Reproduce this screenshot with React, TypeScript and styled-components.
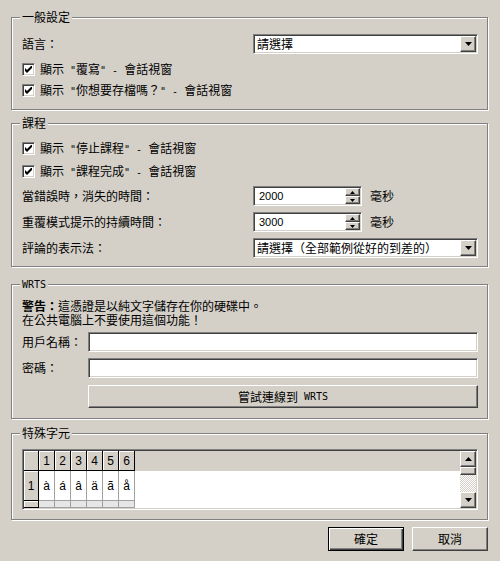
import styled, { createGlobalStyle, css } from "styled-components"

const GlobalStyle = createGlobalStyle`
  html, body {
    margin: 0;
    padding: 0;
    background: #d4d0c8;
  }
  body {
    font-family: "Noto Sans CJK TC", "Noto Sans", sans-serif;
    font-size: 12px;
    line-height: 14px;
    color: #000;
  }
`

const sunken = css`
  box-sizing: border-box;
  border: 1px solid;
  border-color: #808080 #fff #fff #808080;
  box-shadow: inset 1px 1px 0 #404040, inset -1px -1px 0 #d4d0c8;
  background: #fff;
`

const raised = css`
  box-sizing: border-box;
  border: 1px solid;
  border-color: #fff #404040 #404040 #fff;
  box-shadow: inset -1px -1px 0 #808080, inset 1px 1px 0 #d4d0c8;
  background: #d4d0c8;
`

const Dialog = styled.div`
  width: 500px;
  height: 561px;
  box-sizing: border-box;
  padding: 10px 12px 0 11px;
  display: flex;
  flex-direction: column;
  background: #d4d0c8;
`

const Group = styled.fieldset<{ $mt: number; $pt: number; $pb: number }>`
  margin: ${p => p.$mt}px 0 0;
  padding: ${p => p.$pt}px 9px ${p => p.$pb}px 10px;
  min-width: 0;
  border: 1px solid #808080;
  box-shadow: 1px 1px 0 #fff, inset 1px 1px 0 #fff;
`

const Legend = styled.legend`
  padding: 0 2px;
  margin-left: -2px;
  line-height: 14px;
  background: #d4d0c8;
`

// half-width latin runs, 6px per character like the original dialog font
const Latin = styled.span`
  font-family: "DejaVu Sans Mono", "Liberation Mono", monospace;
  font-size: 10px;
  white-space: pre;
`

const Row = styled.div<{ $h: number; $mt?: number }>`
  display: flex;
  align-items: center;
  height: ${p => p.$h}px;
  margin-top: ${p => p.$mt ?? 0}px;
`

const Label = styled.span<{ $w: number }>`
  flex: none;
  width: ${p => p.$w}px;
  white-space: nowrap;
`

const CheckBox = styled.span`
  ${sunken};
  flex: none;
  width: 13px;
  height: 13px;
  display: flex;
  align-items: center;
  justify-content: center;
  margin-right: 5px;
`

const Combo = styled.div<{ $w: number }>`
  ${sunken};
  width: ${p => p.$w}px;
  height: 20px;
  padding: 1px;
  display: flex;
  align-items: center;
`

const FieldText = styled.span<{ $pl: number; $latin?: boolean }>`
  flex: 1;
  min-width: 0;
  padding-left: ${p => p.$pl}px;
  white-space: nowrap;
  ${p => p.$latin && css`
    font-family: "Liberation Sans", Arial, sans-serif;
    font-size: 11px;
  `}
`

const DropButton = styled.span`
  ${raised};
  flex: none;
  width: 16px;
  height: 16px;
  display: flex;
  align-items: center;
  justify-content: center;
`

const SpinStack = styled.span`
  flex: none;
  width: 15px;
  height: 16px;
  display: flex;
  flex-direction: column;
`

const SpinButton = styled.span`
  ${raised};
  height: 8px;
  display: flex;
  align-items: center;
  justify-content: center;
`

const Unit = styled.span`
  margin-left: 8px;
`

const TextInput = styled.div`
  ${sunken};
  flex: 1;
  height: 20px;
`

const Warning = styled.div`
  line-height: 14px;
  b {
    font-weight: bold;
  }
`

const PushButton = styled.div<{ $w?: number; $h: number; $default?: boolean }>`
  ${raised};
  ${p => p.$w ? css`width: ${p.$w}px;` : css`flex: 1;`}
  height: ${p => p.$h}px;
  display: flex;
  align-items: center;
  justify-content: center;
  white-space: nowrap;
  ${p => p.$default && css`
    border: 1px solid #000;
    box-shadow: inset 1px 1px 0 #fff, inset -1px -1px 0 #404040, inset -2px -2px 0 #808080;
  `}
`

const Footer = styled.div`
  display: flex;
  justify-content: flex-end;
  gap: 8px;
  margin-top: 7px;
`

const GridFrame = styled.div`
  ${sunken};
  height: 61px;
  padding: 1px;
  display: flex;
`

const Sheet = styled.div`
  flex: 1;
  display: grid;
  grid-template-columns: 15px repeat(6, 16px) 1fr;
  grid-template-rows: 20px 30px 1fr;
  background: #fff;
  overflow: hidden;
  font-family: "Liberation Sans", Arial, sans-serif;
  font-size: 12px;
`

const HeadCell = styled.div<{ $fill?: boolean }>`
  box-sizing: border-box;
  background: #d4d0c8;
  display: flex;
  align-items: center;
  justify-content: center;
  ${p => !p.$fill && css`
    border-right: 1px solid #000;
    border-bottom: 1px solid #000;
    box-shadow: inset 1px 1px 0 #fff;
  `}
`

const Cell = styled.div<{ $dim?: boolean }>`
  box-sizing: border-box;
  background: ${p => p.$dim ? "#e6e6e6" : "#fff"};
  border-right: 1px solid #a0a0a0;
  border-bottom: 1px solid #a0a0a0;
  display: flex;
  align-items: center;
  justify-content: center;
`

const Blank = styled.div`
  background: #fff;
`

const ScrollBar = styled.div`
  flex: none;
  width: 16px;
  display: flex;
  flex-direction: column;
`

const ScrollButton = styled.span<{ $h: number }>`
  ${raised};
  flex: none;
  height: ${p => p.$h}px;
  display: flex;
  align-items: center;
  justify-content: center;
`

const ScrollTrack = styled.span`
  flex: 1;
  background: repeating-conic-gradient(#fff 0 25%, #d4d0c8 0 50%) 0 0 / 2px 2px;
`

const Check = () => (
  <svg width="7" height="7" viewBox="0 0 7 7">
    <path d="M0 2 L2 4 L6 0 L7 0 L7 2 L2 7 L0 5 Z" fill="#000" />
  </svg>
)

const Arrow = ({ up, w = 7 }: { up?: boolean; w?: number }) => {
  const h = Math.ceil(w / 2)
  return (
    <svg width={w} height={h} viewBox={`0 0 ${w} ${h}`}>
      <path d={up ? `M0 ${h} L${w / 2} 0 L${w} ${h} Z` : `M0 0 L${w} 0 L${w / 2} ${h} Z`} fill="#000" />
    </svg>
  )
}

// split a string so ascii runs get the half-width latin face
const Txt = ({ s }: { s: string }) => (
  <>
    {s.split(/([\x20-\x7e]+)/).map((part, i) =>
      i % 2 ? <Latin key={i}>{part}</Latin> : part
    )}
  </>
)

const CheckLine = ({ text, mt }: { text: string; mt?: number }) => (
  <Row $h={21} $mt={mt}>
    <CheckBox><Check /></CheckBox>
    <span><Txt s={text} /></span>
  </Row>
)

const SelectBox = ({ text }: { text: string }) => (
  <Combo $w={225}>
    <FieldText $pl={2}>{text}</FieldText>
    <DropButton><Arrow /></DropButton>
  </Combo>
)

const SpinBox = ({ value }: { value: string }) => (
  <Combo $w={109}>
    <FieldText $pl={4} $latin>{value}</FieldText>
    <SpinStack>
      <SpinButton><Arrow up w={5} /></SpinButton>
      <SpinButton><Arrow w={5} /></SpinButton>
    </SpinStack>
  </Combo>
)

const accents = ["à", "á", "â", "ä", "ã", "å"]

export default function App() {
  return (
    <Dialog>
      <GlobalStyle />

      <Group $mt={0} $pt={10} $pb={8}>
        <Legend>一般設定</Legend>
        <Row $h={20}>
          <Label $w={231}>語言：</Label>
          <SelectBox text="請選擇" />
        </Row>
        <CheckLine mt={5} text={'顯示 "覆寫" - 會話視窗'} />
        <CheckLine text={'顯示 "你想要存檔嗎？" - 會話視窗'} />
      </Group>

      <Group $mt={6} $pt={8} $pb={8}>
        <Legend>課程</Legend>
        <CheckLine text={'顯示 "停止課程" - 會話視窗'} />
        <CheckLine mt={2} text={'顯示 "課程完成" - 會話視窗'} />
        <Row $h={20} $mt={4}>
          <Label $w={231}>當錯誤時，消失的時間：</Label>
          <SpinBox value="2000" />
          <Unit>毫秒</Unit>
        </Row>
        <Row $h={20} $mt={6}>
          <Label $w={231}>重覆模式提示的持續時間：</Label>
          <SpinBox value="3000" />
          <Unit>毫秒</Unit>
        </Row>
        <Row $h={20} $mt={6}>
          <Label $w={231}>評論的表示法：</Label>
          <SelectBox text="請選擇（全部範例從好的到差的）" />
        </Row>
      </Group>

      <Group $mt={9} $pt={7} $pb={10}>
        <Legend><Latin>WRTS</Latin></Legend>
        <Warning>
          <b>警告：</b>這憑證是以純文字儲存在你的硬碟中。<br />
          在公共電腦上不要使用這個功能！
        </Warning>
        <Row $h={20} $mt={5}>
          <Label $w={66}>用戶名稱：</Label>
          <TextInput />
        </Row>
        <Row $h={20} $mt={6}>
          <Label $w={66}>密碼：</Label>
          <TextInput />
        </Row>
        <Row $h={23} $mt={7}>
          <Label $w={66} />
          <PushButton $h={23}><Txt s="嘗試連線到 WRTS" /></PushButton>
        </Row>
      </Group>

      <Group $mt={7} $pt={9} $pb={9}>
        <Legend>特殊字元</Legend>
        <GridFrame>
          <Sheet>
            <HeadCell />
            {accents.map((_, i) => <HeadCell key={i}>{i + 1}</HeadCell>)}
            <HeadCell $fill />
            <HeadCell>1</HeadCell>
            {accents.map(a => <Cell key={a}>{a}</Cell>)}
            <Blank />
            <HeadCell />
            {accents.map(a => <Cell key={a} $dim />)}
            <Blank />
          </Sheet>
          <ScrollBar>
            <ScrollButton $h={16}><Arrow up /></ScrollButton>
            <ScrollButton $h={8} />
            <ScrollTrack />
            <ScrollButton $h={16}><Arrow /></ScrollButton>
          </ScrollBar>
        </GridFrame>
      </Group>

      <Footer>
        <PushButton $w={76} $h={24} $default>確定</PushButton>
        <PushButton $w={76} $h={24}>取消</PushButton>
      </Footer>
    </Dialog>
  )
}
